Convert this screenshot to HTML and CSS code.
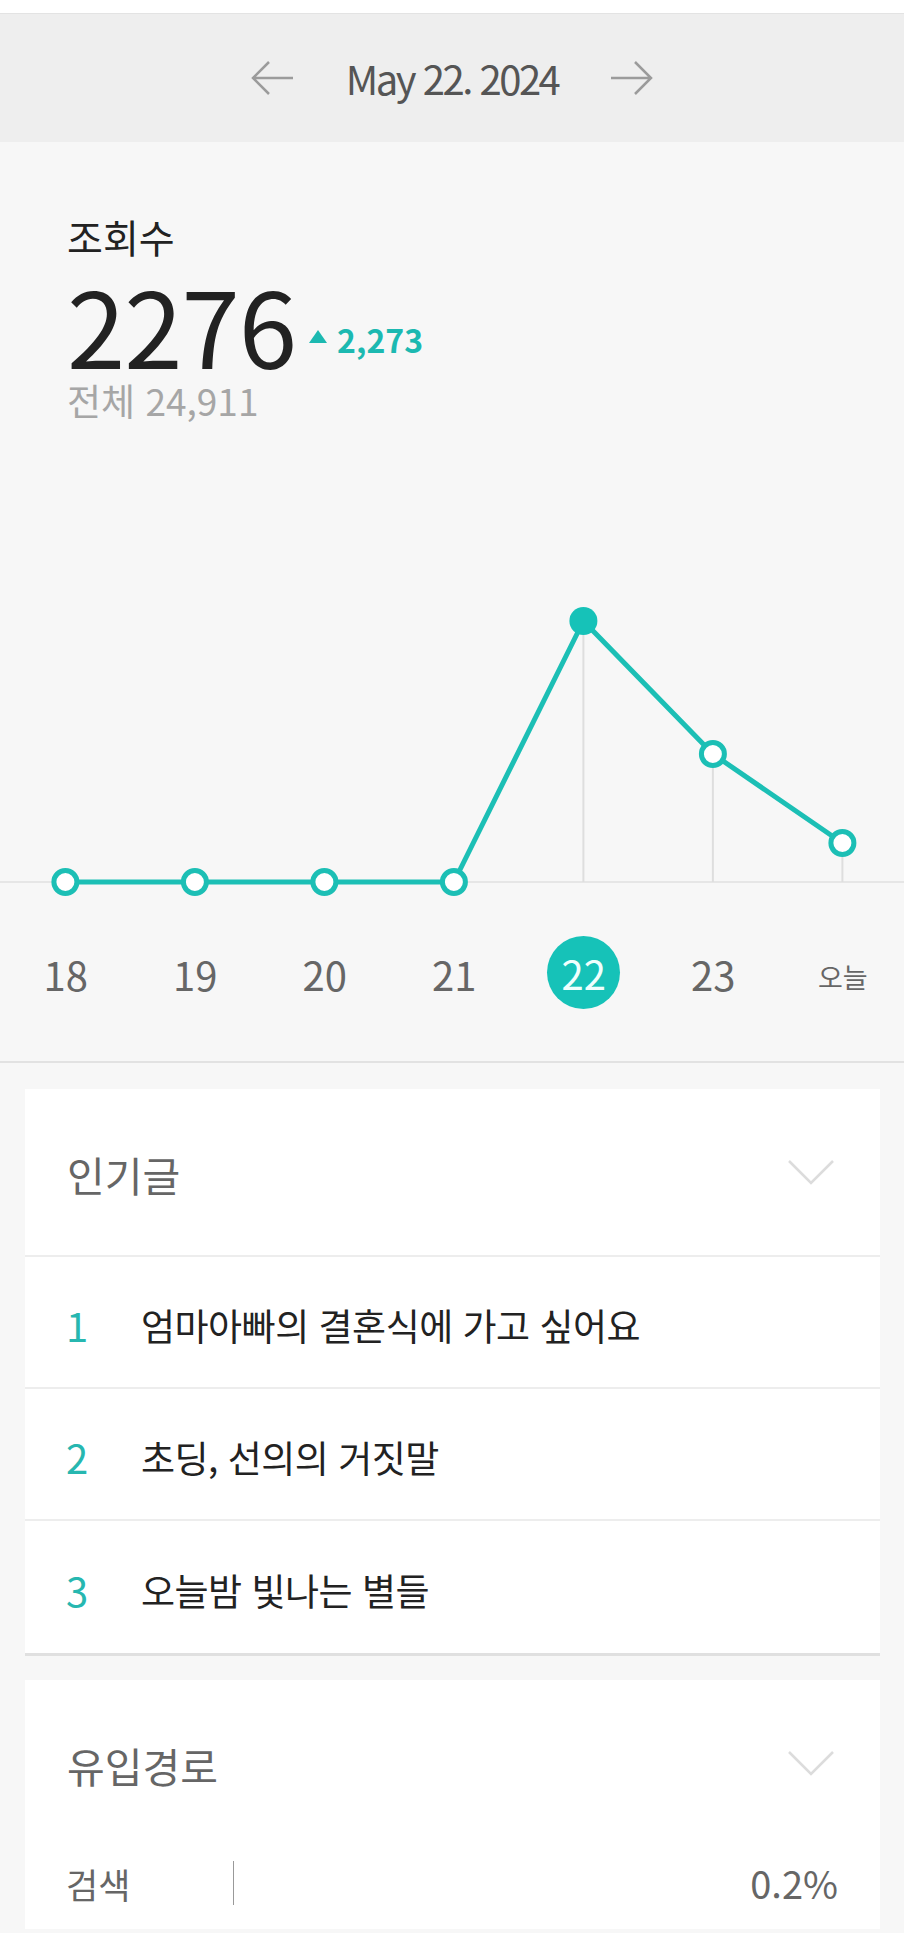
FILE: index.html
```html
<!DOCTYPE html>
<html lang="ko">
<head>
  <meta charset="UTF-8">
  <title>블로그 통계 - 조회수</title>
  <link rel="stylesheet" href="styles.css">
</head>
<body>

  <div class="top-strip"></div>

  <div class="date-nav">
    <svg class="arrow" width="44" height="36" viewBox="0 0 44 36">
      <path d="M43 18H3M19 2L3 18l16 16" />
    </svg>
    <span class="date-text">May 22. 2024</span>
    <svg class="arrow" width="44" height="36" viewBox="0 0 44 36">
      <path d="M1 18h40M25 2l16 16-16 16" />
    </svg>
  </div>

  <div class="stats">
    <div class="stats-label">조회수</div>
    <div class="stats-main">
      <span class="stats-count">2276</span>
      <span class="stats-diff"><span class="tri"></span>2,273</span>
    </div>
    <div class="stats-total">전체 24,911</div>
  </div>

  <svg class="chart" width="904" height="470" viewBox="0 0 904 470">
    <line class="base" x1="0" y1="453" x2="904" y2="453" />
    <line class="guide" x1="583.4" y1="192" x2="583.4" y2="453" />
    <line class="guide" x1="712.9" y1="325" x2="712.9" y2="453" />
    <line class="guide" x1="842.4" y1="414" x2="842.4" y2="453" />
    <polyline class="trend" points="65.4,453 194.9,453 324.4,453 453.9,453 583.4,192 712.9,325 842.4,414" />
    <circle class="dot" cx="65.4" cy="453" r="11.5" />
    <circle class="dot" cx="194.9" cy="453" r="11.5" />
    <circle class="dot" cx="324.4" cy="453" r="11.5" />
    <circle class="dot" cx="453.9" cy="453" r="11.5" />
    <circle class="dot active" cx="583.4" cy="192" r="14" />
    <circle class="dot" cx="712.9" cy="325" r="11.5" />
    <circle class="dot" cx="842.4" cy="414" r="11.5" />
  </svg>

  <div class="days">
    <div class="day"><span>18</span></div>
    <div class="day"><span>19</span></div>
    <div class="day"><span>20</span></div>
    <div class="day"><span>21</span></div>
    <div class="day"><span class="selected">22</span></div>
    <div class="day"><span>23</span></div>
    <div class="day"><span class="today">오늘</span></div>
  </div>

  <div class="card">
    <div class="card-head">
      <h2>인기글</h2>
      <svg class="chevron" width="46" height="25" viewBox="0 0 46 25">
        <path d="M1 1l22 22L45 1" />
      </svg>
    </div>
    <ul class="post-list">
      <li><span class="rank">1</span><span class="post-title">엄마아빠의 결혼식에 가고 싶어요</span></li>
      <li><span class="rank">2</span><span class="post-title">초딩, 선의의 거짓말</span></li>
      <li><span class="rank">3</span><span class="post-title">오늘밤 빛나는 별들</span></li>
    </ul>
  </div>

  <div class="card last">
    <div class="card-head open">
      <h2>유입경로</h2>
      <svg class="chevron" width="46" height="25" viewBox="0 0 46 25">
        <path d="M1 1l22 22L45 1" />
      </svg>
    </div>
    <div class="source-row">
      <span class="source-name">검색</span>
      <span class="source-bar"></span>
      <span class="source-pct">0.2%</span>
    </div>
  </div>

</body>
</html>
```

FILE: styles.css
```css
body {
  margin: 0;
  background-color: #f7f7f7;
  font-family: "Noto Sans CJK KR", "Noto Sans", sans-serif;
  color: #222;
  overflow-x: hidden;
}
.top-strip {
  height: 13px;
  background-color: #fff;
}
.date-nav {
  height: 128px;
  border-top: 1px solid #e3e3e3;
  background-color: #eee;
  display: flex;
  align-items: center;
  justify-content: center;
  gap: 52px;
}
.arrow path {
  fill: none;
  stroke: #9b9b9b;
  stroke-width: 2.5;
}
.date-text {
  font-size: 40px;
  line-height: 1;
  color: #555;
  letter-spacing: -2.5px;
}

.stats {
  padding: 75px 0 0 67px;
}
.stats-label {
  font-size: 39px;
  line-height: 1;
}
.stats-main {
  display: flex;
  align-items: flex-start;
  margin-top: 15px;
}
.stats-count {
  font-size: 105px;
  line-height: 1;
  letter-spacing: -1px;
}
.stats-diff {
  margin: 52px 0 0 13px;
  font-size: 32px;
  line-height: 1;
  font-weight: bold;
  color: #1cb9b1;
  display: flex;
  align-items: center;
}
.tri {
  width: 0;
  height: 0;
  border-left: 9px solid transparent;
  border-right: 9px solid transparent;
  border-bottom: 13px solid #1cb9b1;
  margin: 0 10px 6px 0;
}
.stats-total {
  margin-top: 6px;
  font-size: 37px;
  line-height: 1;
  color: #a6a6a6;
}

.chart {
  display: block;
  margin-top: 10px;
}
.chart .base {
  stroke: #e6e6e6;
  stroke-width: 2;
}
.chart .guide {
  stroke: #dedede;
  stroke-width: 2;
}
.chart .trend {
  fill: none;
  stroke: #1cbfb5;
  stroke-width: 5;
  stroke-linejoin: round;
}
.chart .dot {
  fill: #fff;
  stroke: #1cbfb5;
  stroke-width: 5;
}
.chart .dot.active {
  fill: #16c2b8;
  stroke: none;
}

.days {
  display: grid;
  grid-template-columns: repeat(7, 129.5px);
  padding: 37px 0 52px 1px;
  border-bottom: 2px solid #e2e2e2;
}
.day {
  height: 73px;
  display: flex;
  align-items: center;
  justify-content: center;
}
.day span {
  font-size: 40px;
  line-height: 1;
  color: #666;
  padding-top: 3px;
}
.day .selected {
  width: 73px;
  height: 73px;
  padding: 0;
  border-radius: 50%;
  background-color: #16c2b8;
  color: #effffd;
  display: flex;
  align-items: center;
  justify-content: center;
}
.day .today {
  font-size: 27px;
  padding-top: 8px;
}

.card {
  margin: 26px 24px 0 25px;
  background-color: #fff;
  border-bottom: 3px solid #e0e0e0;
}
.card.last {
  margin-top: 24px;
  border-bottom: none;
  padding-bottom: 24px;
}
.card-head {
  height: 166px;
  padding: 0 46px 0 42px;
  display: flex;
  align-items: center;
  justify-content: space-between;
  border-bottom: 2px solid #ededed;
}
.card-head.open {
  border-bottom: none;
}
.card-head h2 {
  margin: 0;
  font-size: 41px;
  line-height: 1;
  font-weight: normal;
  color: #666;
  padding-top: 4px;
}
.chevron path {
  fill: none;
  stroke: #dcdcdc;
  stroke-width: 2.5;
}

.post-list {
  list-style: none;
  margin: 0;
  padding: 0;
}
.post-list li {
  height: 132px;
  padding: 6px 0 0 41px;
  box-sizing: border-box;
  display: flex;
  align-items: center;
  border-bottom: 2px solid #ededed;
}
.post-list li:last-child {
  border-bottom: none;
}
.rank {
  width: 75px;
  font-size: 40px;
  line-height: 1;
  color: #27b7b0;
}
.post-title {
  font-size: 37px;
  line-height: 1;
  color: #222;
  letter-spacing: -0.5px;
}

.source-row {
  height: 44px;
  margin-top: 15px;
  padding: 0 42px 0 41px;
  display: flex;
  align-items: center;
}
.source-name {
  width: 167px;
  font-size: 35px;
  line-height: 1;
  color: #666;
}
.source-bar {
  width: 1px;
  height: 44px;
  background-color: #999;
}
.source-pct {
  margin-left: auto;
  font-size: 38px;
  line-height: 1;
  color: #666;
}
```
